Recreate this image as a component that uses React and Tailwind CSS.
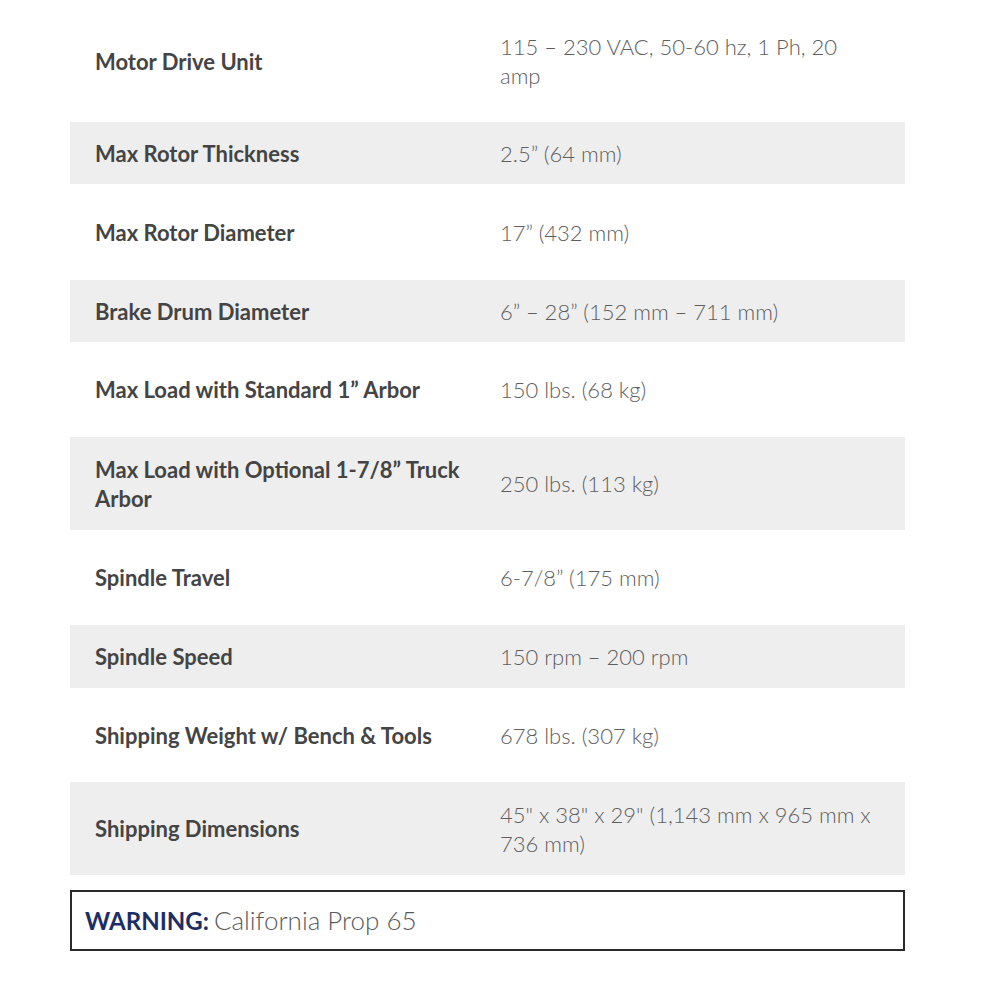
const specs = [
  { label: "Motor Drive Unit", value: "115 – 230 VAC, 50-60 hz, 1 Ph, 20 amp", h: "h-[122px]" },
  { label: "Max Rotor Thickness", value: "2.5” (64 mm)", h: "h-[62px]" },
  { label: "Max Rotor Diameter", value: "17” (432 mm)", h: "h-[96px]" },
  { label: "Brake Drum Diameter", value: "6” – 28” (152 mm – 711 mm)", h: "h-[62px]" },
  { label: "Max Load with Standard 1” Arbor", value: "150 lbs. (68 kg)", h: "h-[95px]" },
  { label: "Max Load with Optional 1-7/8” Truck Arbor", value: "250 lbs. (113 kg)", h: "h-[93px]" },
  { label: "Spindle Travel", value: "6-7/8” (175 mm)", h: "h-[95px]" },
  { label: "Spindle Speed", value: "150 rpm – 200 rpm", h: "h-[63px]" },
  { label: "Shipping Weight w/ Bench & Tools", value: "678 lbs. (307 kg)", h: "h-[94px]" },
  { label: "Shipping Dimensions", value: "45\" x 38\" x 29\" (1,143 mm x 965 mm x 736 mm)", h: "h-[93px]" },
];

export default function App() {
  return (
    <div className="min-h-screen w-[1000px] bg-white font-['Lato',sans-serif]">
      <div className="ml-[70px] w-[835px]">
        {specs.map((row, i) => (
          <div
            key={row.label}
            className={`flex items-center ${row.h} ${i % 2 === 1 ? "bg-[#eeeeee]" : "bg-white"}`}
          >
            <div className="w-[405px] shrink-0 pl-[25px] pr-[4px] text-[22px] leading-[29px] font-bold text-[#444444]">
              {row.label}
            </div>
            <div className="flex-1 pl-[25px] pr-[25px] text-[22px] leading-[29px] font-light text-[#5e5e5e]">
              {row.value}
            </div>
          </div>
        ))}
        <div className="mt-[15px] flex h-[61px] items-center border-2 border-[#2a2a2a] px-[13px]">
          <span className="text-[24px] font-bold text-[#1c2e66]">WARNING:</span>
          <span className="ml-[5px] text-[26px] font-light text-[#5a5a5a]">California Prop 65</span>
        </div>
      </div>
    </div>
  );
}
